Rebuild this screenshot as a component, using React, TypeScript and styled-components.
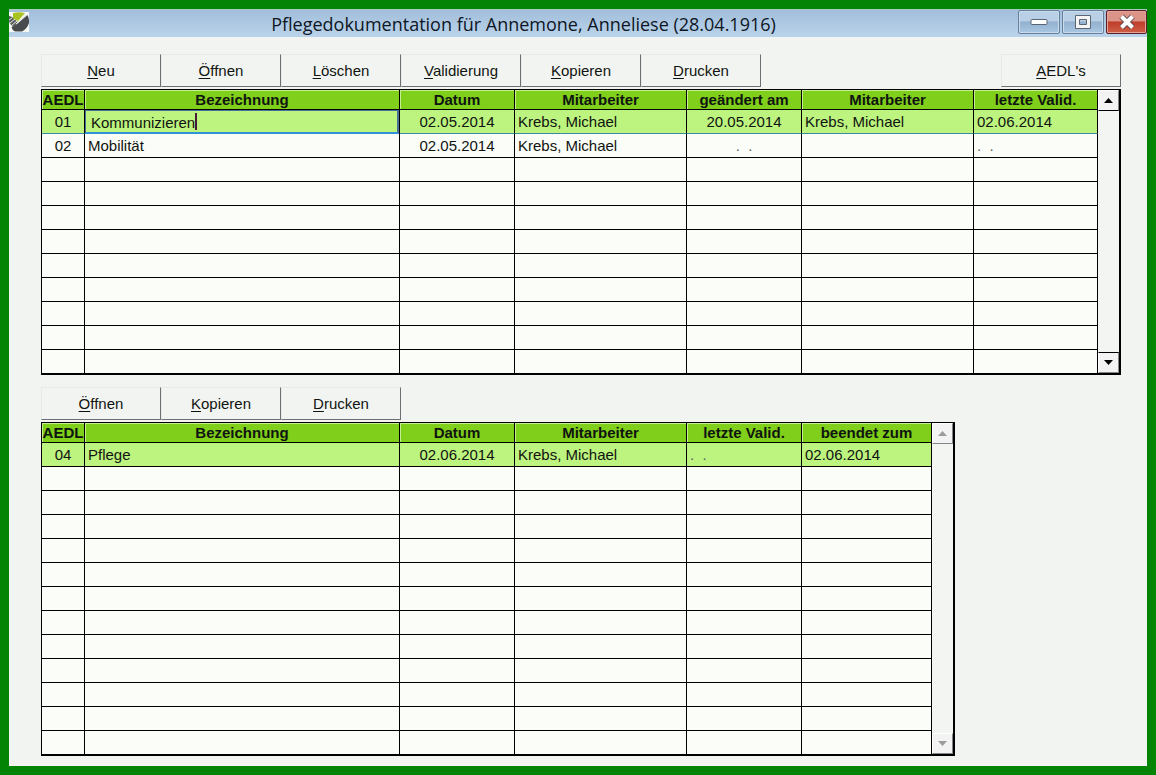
import React from "react";
import styled, { createGlobalStyle, css } from "styled-components";

const GlobalStyle = createGlobalStyle`
  * { box-sizing: border-box; }
  body {
    margin: 0;
    background: #048404;
    font-family: "Liberation Sans", Arial, sans-serif;
    font-size: 15px;
    color: #101410;
  }
`;

const Desktop = styled.div`
  min-height: 100vh;
  padding: 9px;
  display: flex;
`;

const Window = styled.main`
  flex: 1;
  min-width: 0;
  display: flex;
  flex-direction: column;
  background: #f1f4f1;
`;

const TitleBar = styled.header`
  display: flex;
  align-items: center;
  height: 28px;
  border-top: 1px solid #a3cfc0;
  background: linear-gradient(#a3bedb, #b9d3ea);
`;

const AppIcon = styled.svg`
  width: 20px;
  height: 20px;
  flex: none;
  align-self: flex-start;
  margin-top: 2px;
`;

const Title = styled.h1`
  flex: 1;
  margin: 0;
  text-align: center;
  font: 400 18px/26px "Open Sans", "Noto Sans", sans-serif;
  color: #0e1624;
  white-space: nowrap;
`;

const Controls = styled.div`
  display: flex;
  gap: 2px;
  align-self: flex-start;
`;

const ControlButton = styled.button<{ $close?: boolean }>`
  display: grid;
  place-items: center;
  width: ${(p) => (p.$close ? "41px" : "42px")};
  height: 24px;
  padding: 0;
  border: 1px solid ${(p) => (p.$close ? "#5c2024" : "#66809c")};
  border-radius: 2px;
  box-shadow: inset 0 0 0 1px ${(p) => (p.$close ? "#e3a39a" : "#c9dcee")};
  background: ${(p) =>
    p.$close
      ? "linear-gradient(#dd9488 0 45%, #bf3d29 50%, #cf6048)"
      : "linear-gradient(#b9cfe5 0 45%, #93b0cf 50%, #a9c6e2)"};
`;

const Content = styled.div`
  padding: 17px 26px 10px 32px;
`;

const Toolbar = styled.div`
  display: flex;
  margin-bottom: 2px;
`;

const Spacer = styled.div`
  flex: 1;
`;

const ToolButton = styled.button`
  width: 120px;
  height: 33px;
  padding: 0;
  border: 1px solid;
  border-color: #e6e9e6 #6e6e74 #6e6e74 #e6e9e6;
  background: #f2f4f1;
  color: inherit;
  font: inherit;

  u {
    text-underline-offset: 2px;
    text-decoration-thickness: 1px;
  }
`;

const Grid = styled.div<{ $narrow?: boolean }>`
  display: flex;
  width: 100%;
  max-width: ${(p) => (p.$narrow ? "914px" : "none")};
  border: 1px solid #000;
  border-right-width: 2px;
  border-bottom-width: 2px;

  & + ${Toolbar} {
    margin-top: 12px;
  }
`;

const Table = styled.table`
  flex: 1;
  min-width: 0;
  table-layout: fixed;
  border-collapse: separate;
  border-spacing: 0;
  background: #fafdf8;
`;

const HeadCell = styled.th`
  height: 20px;
  padding: 0;
  border-right: 1px solid #000;
  border-bottom: 1px solid #000;
  background: #7fcf1b;
  box-shadow: inset 1px 1px 0 #c4ee92;
  line-height: 18px;
  font-weight: 700;
  white-space: nowrap;
`;

const Row = styled.tr<{ $selected?: boolean; $active?: boolean }>`
  ${(p) => p.$selected && css`background: #bdf37f;`}
  ${(p) => p.$active && css`td { border-bottom-color: #3a8c9c; }`}

  &:last-child td {
    height: 23px;
    border-bottom: 0;
  }
`;

const Cell = styled.td<{ $center?: boolean; $flush?: boolean; $blank?: boolean }>`
  height: 24px;
  padding: ${(p) => (p.$flush || p.$center ? "0" : "0 3px")};
  border-right: 1px solid #000;
  border-bottom: 1px solid #000;
  color: ${(p) => (p.$blank ? "#5c605c" : "inherit")};
  line-height: 22px;
  text-align: ${(p) => (p.$center ? "center" : "left")};
  white-space: pre;

  ${(p) => p.$flush && css`border-bottom: 0;`}
`;

const Editor = styled.div`
  display: flex;
  align-items: center;
  height: 24px;
  padding-left: 5px;
  border: 1px solid #49709a;
  border-width: 1px 2px 2px 1px;
  border-bottom-color: #2f93d6;
`;

const EditInput = styled.input`
  field-sizing: content;
  height: 21px;
  padding: 2px 0 0;
  border: 0;
  outline: 0;
  background: transparent;
  color: inherit;
  font: inherit;
`;

const Caret = styled.span`
  width: 2px;
  height: 17px;
  background: #4a1838;
`;

const ScrollBar = styled.div`
  display: flex;
  flex-direction: column;
  justify-content: space-between;
  width: 21px;
  background: #f2f5f1;
`;

const ScrollButton = styled.button<{ $disabled?: boolean }>`
  display: grid;
  place-items: center;
  width: 21px;
  height: 21px;
  padding: 0;
  border: 1px solid;
  border-color: #fff #85858a #85858a #fff;
  background: #f2f3f2;
  color: ${(p) => (p.$disabled ? "#9a9d9a" : "#000")};
  ${(p) => !p.$disabled && css`
    &:first-child { border-bottom-color: #000; }
    &:last-child { border-top-color: #000; }
  `}
`;

type Column = { title: string; width?: number; center?: boolean };

const NO_DATE = ".  .";

const currentColumns: Column[] = [
  { title: "AEDL", width: 43, center: true },
  { title: "Bezeichnung" },
  { title: "Datum", width: 115, center: true },
  { title: "Mitarbeiter", width: 172 },
  { title: "geändert am", width: 115, center: true },
  { title: "Mitarbeiter", width: 172 },
  { title: "letzte Valid.", width: 124 },
];

const currentRows = [
  ["01", "Kommunizieren", "02.05.2014", "Krebs, Michael", "20.05.2014", "Krebs, Michael", "02.06.2014"],
  ["02", "Mobilität", "02.05.2014", "Krebs, Michael", NO_DATE, "", NO_DATE],
];

const endedColumns: Column[] = [
  { title: "AEDL", width: 43, center: true },
  { title: "Bezeichnung" },
  { title: "Datum", width: 115, center: true },
  { title: "Mitarbeiter", width: 172 },
  { title: "letzte Valid.", width: 115 },
  { title: "beendet zum", width: 130 },
];

const endedRows = [["04", "Pflege", "02.06.2014", "Krebs, Michael", NO_DATE, "02.06.2014"]];

function Arrow({ down }: { down?: boolean }) {
  return (
    <svg width="9" height="5" viewBox="0 0 9 5" aria-hidden="true">
      <path d={down ? "M0 0h9L4.500 5z" : "M0 5h9L4.500 0z"} fill="currentColor" />
    </svg>
  );
}

function Tool({ label }: { label: string }) {
  return (
    <ToolButton type="button">
      <u>{label[0]}</u>
      {label.slice(1)}
    </ToolButton>
  );
}

type DataGridProps = {
  label: string;
  columns: Column[];
  rows: string[][];
  rowCount: number;
  editing?: boolean;
  narrow?: boolean;
};

function DataGrid({ label, columns, rows, rowCount, editing, narrow }: DataGridProps) {
  return (
    <Grid $narrow={narrow}>
      <Table aria-label={label}>
        <colgroup>
          {columns.map((c, i) => (
            <col key={i} width={c.width} />
          ))}
        </colgroup>
        <thead>
          <tr>
            {columns.map((c, i) => (
              <HeadCell key={i} scope="col">{c.title}</HeadCell>
            ))}
          </tr>
        </thead>
        <tbody>
          {Array.from({ length: rowCount }, (_, r) => (
            <Row key={r} $selected={r === 0} $active={editing && r === 0}>
              {columns.map((c, i) => {
                const text = rows[r]?.[i] ?? "";
                return editing && r === 0 && i === 1 ? (
                  <Cell key={i} $flush>
                    <Editor>
                      <EditInput aria-label={c.title} defaultValue={text} />
                      <Caret />
                    </Editor>
                  </Cell>
                ) : (
                  <Cell key={i} $center={c.center} $blank={text === NO_DATE}>{text}</Cell>
                );
              })}
            </Row>
          ))}
        </tbody>
      </Table>
      <ScrollBar>
        <ScrollButton type="button" aria-label="Nach oben" $disabled={narrow}><Arrow /></ScrollButton>
        <ScrollButton type="button" aria-label="Nach unten" $disabled={narrow}><Arrow down /></ScrollButton>
      </ScrollBar>
    </Grid>
  );
}

export default function App() {
  return (
    <Desktop>
      <GlobalStyle />
      <Window>
        <TitleBar>
          <AppIcon viewBox="0 0 20 20" aria-hidden="true">
            <rect width="20" height="20" fill="#f6f8f3" />
            <path d="M4 1Q10-.5 16 1L9 9 4 7z" fill="#a9c422" />
            <path d="M18.500 3Q20.500 7 20 11 18 17 13 19.500H6Q3 18 2.500 15L8 12z" fill="#484b4d" />
            <path d="M0 4Q3 4 5 7L9 10 5 15Q1 13 0 9z" fill="#5b5e5c" />
            <path d="M0 8l3-2M1 11l5-4M2 14l6-5" stroke="#e8ebe6" strokeWidth="1" />
            <path d="M7 12L17 3" stroke="#e4e9d8" strokeWidth="1" />
          </AppIcon>
          <Title>Pflegedokumentation für Annemone, Anneliese (28.04.1916)</Title>
          <Controls>
            <ControlButton type="button" aria-label="Minimieren">
              <svg width="18" height="8" viewBox="0 0 18 8">
                <rect x="1" y="1.500" width="16" height="5" rx="1" fill="#fff" stroke="#5c6673" />
              </svg>
            </ControlButton>
            <ControlButton type="button" aria-label="Maximieren">
              <svg width="18" height="16" viewBox="0 0 18 16">
                <path fillRule="evenodd" d="M1.500 1.500h15v13h-15zM5.500 5.500h7v5h-7z" fill="#f5f5f5" stroke="#5c6673" />
              </svg>
            </ControlButton>
            <ControlButton type="button" aria-label="Schließen" $close>
              <svg width="18" height="16" viewBox="0 0 18 16">
                <path d="M3.500 2.500l11 11M14.500 2.500l-11 11" stroke="#5d4a50" strokeWidth="6" />
                <path d="M3.500 2.500l11 11M14.500 2.500l-11 11" stroke="#fff" strokeWidth="4" />
              </svg>
            </ControlButton>
          </Controls>
        </TitleBar>
        <Content>
          <Toolbar>
            {["Neu", "Öffnen", "Löschen", "Validierung", "Kopieren", "Drucken"].map((l) => (
              <Tool key={l} label={l} />
            ))}
            <Spacer />
            <Tool label="AEDL's" />
          </Toolbar>
          <DataGrid label="Aktuelle AEDL" columns={currentColumns} rows={currentRows} rowCount={11} editing />
          <Toolbar>
            {["Öffnen", "Kopieren", "Drucken"].map((l) => (
              <Tool key={l} label={l} />
            ))}
          </Toolbar>
          <DataGrid label="Beendete AEDL" columns={endedColumns} rows={endedRows} rowCount={13} narrow />
        </Content>
      </Window>
    </Desktop>
  );
}
